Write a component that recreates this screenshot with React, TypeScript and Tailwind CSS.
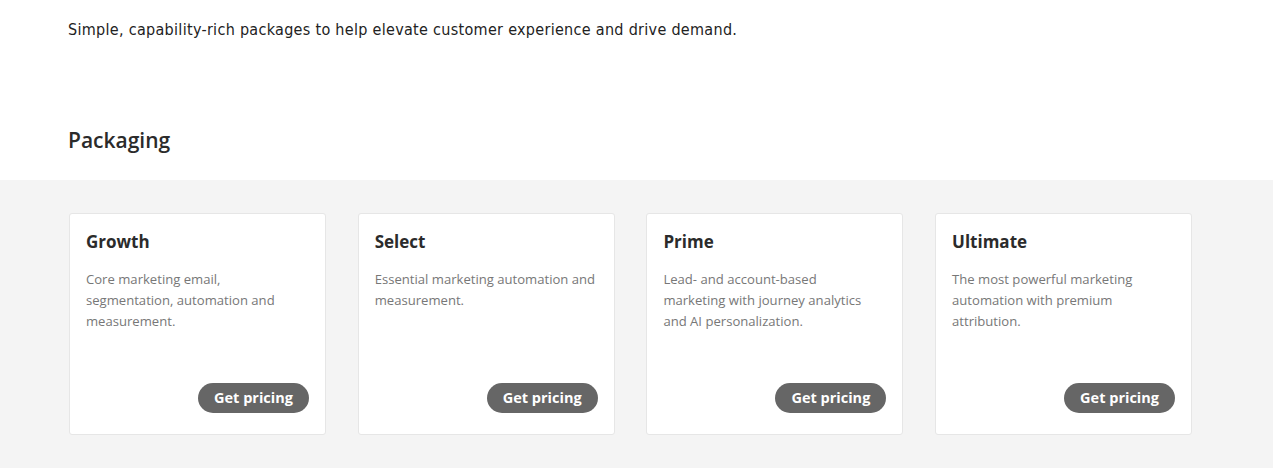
const plans = [
  { name: "Growth", lines: ["Core marketing email,", "segmentation, automation and", "measurement."] },
  { name: "Select", lines: ["Essential marketing automation and", "measurement."] },
  { name: "Prime", lines: ["Lead- and account-based", "marketing with journey analytics", "and AI personalization."] },
  { name: "Ultimate", lines: ["The most powerful marketing", "automation with premium", "attribution."] },
];

function PlanCard({ name, lines }: { name: string; lines: string[] }) {
  return (
    <div className="flex h-[222px] w-[257px] flex-col rounded-[3px] border border-[#e6e6e6] bg-white pb-[21px] pl-[16px] pr-[16px] pt-[16px]">
      <h3 className="text-[17px] font-bold leading-[24px] text-[#2b2b2b]">{name}</h3>
      <p className="mt-[15px] mr-[-4px] whitespace-nowrap text-[13.1px] leading-[21px] text-[#777777]">
        {lines.map((l) => (
          <span key={l} className="block">
            {l}
          </span>
        ))}
      </p>
      <div className="mt-auto flex justify-end">
        <button className="h-[30px] w-[111px] rounded-full bg-[#666666] text-[14.5px] font-bold text-white">
          Get pricing
        </button>
      </div>
    </div>
  );
}

export default function App() {
  return (
    <div className="h-[468px] w-[1273px] overflow-hidden bg-white font-['Open_Sans','Noto_Sans',sans-serif]">
      <section className="h-[180px] px-[68px] pt-[19px]">
        <p className="font-['DejaVu_Sans_Condensed','DejaVu_Sans',sans-serif] text-[16px] leading-[22px] tracking-[0.3px] text-[#222]">
          Simple, capability-rich packages to help elevate customer experience and drive demand.
        </p>
        <h2 className="mt-[85px] text-[21px] font-semibold leading-[28px] text-[#2b2b2b]">Packaging</h2>
      </section>
      <section className="h-[288px] bg-[#f4f4f4] pl-[69px] pt-[33px]">
        <div className="flex gap-[31.7px]">
          {plans.map((p) => (
            <PlanCard key={p.name} name={p.name} lines={p.lines} />
          ))}
        </div>
      </section>
    </div>
  );
}
